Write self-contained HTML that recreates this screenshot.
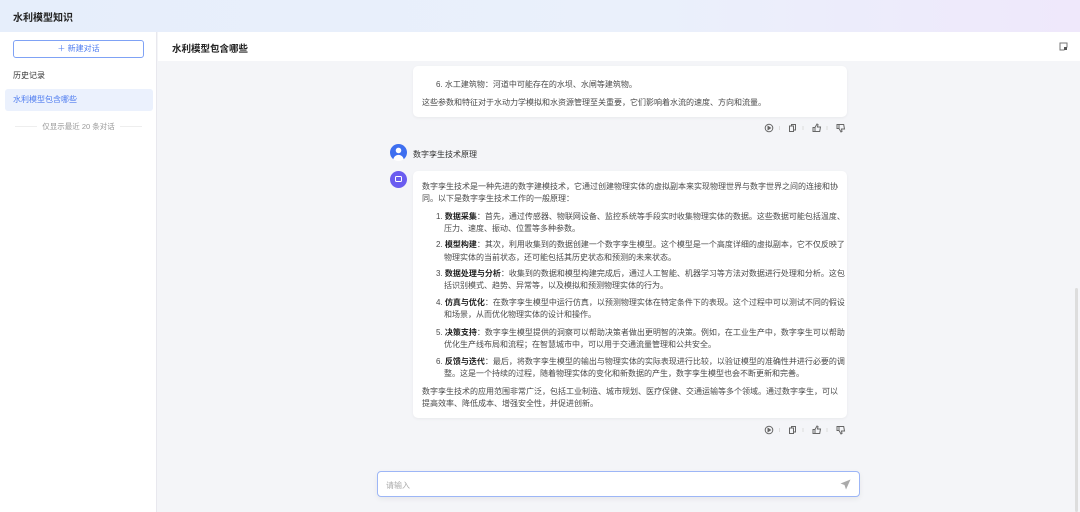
<!DOCTYPE html>
<html><head><meta charset="utf-8"><style>
*{margin:0;padding:0;box-sizing:border-box}
body{width:1080px;height:512px;overflow:hidden;font-family:"Liberation Sans","Noto Sans CJK SC",sans-serif;background:#f4f5f8;position:relative;color:#333}
.top{position:absolute;left:0;top:0;width:1080px;height:32px;background:linear-gradient(90deg,#e6eefb 0%,#eaf0fb 60%,#efe8fb 100%)}
.top span{position:absolute;left:13px;top:9px;font-size:10px;font-weight:bold;color:#222}
.side{position:absolute;left:0;top:32px;width:157px;height:480px;background:#fff;border-right:1px solid #e8e8ee}
.nb{position:absolute;left:13px;top:8px;width:131px;height:18px;border:1px solid #7fa2f5;border-radius:3px;color:#4e7cf0;font-size:8px;text-align:center;line-height:16px}
.hist{position:absolute;left:13px;top:38px;font-size:8px;color:#333}
.act{position:absolute;left:5px;top:57px;width:148px;height:22px;background:#ebf1fd;border-radius:3px;color:#4e7cf0;font-size:8px;line-height:22px;padding-left:8px}
.lim{position:absolute;left:13px;top:89px;width:131px;font-size:7.5px;color:#999;text-align:center}
.lim:before,.lim:after{content:"";position:absolute;top:5px;width:22px;border-top:1px solid #eee}
.lim:before{left:2px}.lim:after{right:2px}
.mh{position:absolute;left:158px;top:32px;width:922px;height:29px;background:#fff}
.mh span{position:absolute;left:14px;top:9px;font-size:9.5px;font-weight:bold;color:#222}
.card{position:absolute;left:413px;width:434px;background:#fff;border-radius:5px;box-shadow:0 1px 3px rgba(0,0,0,.05);font-size:8px;color:#444;padding:0 9px}
.ln{position:absolute;white-space:nowrap;font-size:8px;color:#4a4a4a}
.av{position:absolute;left:390px;width:17px;height:17px;border-radius:50%}
.inp{position:absolute;left:377px;top:471px;width:483px;height:26px;background:#fff;border:1px solid #9db6f6;border-radius:4px;box-shadow:0 2px 6px rgba(0,0,0,.06)}
.inp span{position:absolute;left:8px;top:8px;font-size:8px;color:#aaa}
b{color:#222}
</style></head><body>
<div class="top"><span>水利模型知识</span></div>
<div class="side">
<div class="nb">＋ 新建对话</div>
<div class="hist">历史记录</div>
<div class="act">水利模型包含哪些</div>
<div class="lim">仅显示最近 20 条对话</div>
</div>
<div class="mh"><span>水利模型包含哪些</span>
<svg style="position:absolute;left:901px;top:10px" width="9" height="9" viewBox="0 0 9 9"><path d="M1 1h7v4L5 8H1z" fill="none" stroke="#777"/><rect x="5" y="5" width="3" height="3" fill="#555"/></svg></div>

<div class="card" style="top:66px;height:51px"></div>
<div class="ln" style="left:436px;top:79px">6. 水工建筑物：河道中可能存在的水坝、水闸等建筑物。</div>
<div class="ln" style="left:422px;top:97px">这些参数和特征对于水动力学模拟和水资源管理至关重要，它们影响着水流的速度、方向和流量。</div>

<div class="av" style="top:144px;background:radial-gradient(circle at 50% 38%,#fff 0 2.5px,transparent 3px),radial-gradient(circle at 50% 95%,#fff 0 5px,transparent 5.5px),#3e6ff0"></div>
<div class="ln" style="left:413px;top:149px;color:#333">数字孪生技术原理</div>
<div class="av" style="top:171px;background:#6a5cf0"><div style="position:absolute;left:5px;top:5px;width:7px;height:6px;border:1.3px solid #fff;border-radius:1.5px"></div></div>

<div class="card" style="top:171px;height:247px"></div>
<div class="ln" style="left:422px;top:181px">数字孪生技术是一种先进的数字建模技术，它通过创建物理实体的虚拟副本来实现物理世界与数字世界之间的连接和协</div>
<div class="ln" style="left:422px;top:193px">同。以下是数字孪生技术工作的一般原理：</div>
<div class="ln" style="left:436px;top:211px">1. <b>数据采集</b>：首先，通过传感器、物联网设备、监控系统等手段实时收集物理实体的数据。这些数据可能包括温度、</div>
<div class="ln" style="left:444px;top:223px">压力、速度、振动、位置等多种参数。</div>
<div class="ln" style="left:436px;top:239px">2. <b>模型构建</b>：其次，利用收集到的数据创建一个数字孪生模型。这个模型是一个高度详细的虚拟副本，它不仅反映了</div>
<div class="ln" style="left:444px;top:252px">物理实体的当前状态，还可能包括其历史状态和预测的未来状态。</div>
<div class="ln" style="left:436px;top:268px">3. <b>数据处理与分析</b>：收集到的数据和模型构建完成后，通过人工智能、机器学习等方法对数据进行处理和分析。这包</div>
<div class="ln" style="left:444px;top:280px">括识别模式、趋势、异常等，以及模拟和预测物理实体的行为。</div>
<div class="ln" style="left:436px;top:297px">4. <b>仿真与优化</b>：在数字孪生模型中运行仿真，以预测物理实体在特定条件下的表现。这个过程中可以测试不同的假设</div>
<div class="ln" style="left:444px;top:309px">和场景，从而优化物理实体的设计和操作。</div>
<div class="ln" style="left:436px;top:327px">5. <b>决策支持</b>：数字孪生模型提供的洞察可以帮助决策者做出更明智的决策。例如，在工业生产中，数字孪生可以帮助</div>
<div class="ln" style="left:444px;top:339px">优化生产线布局和流程；在智慧城市中，可以用于交通流量管理和公共安全。</div>
<div class="ln" style="left:436px;top:356px">6. <b>反馈与迭代</b>：最后，将数字孪生模型的输出与物理实体的实际表现进行比较，以验证模型的准确性并进行必要的调</div>
<div class="ln" style="left:444px;top:368px">整。这是一个持续的过程，随着物理实体的变化和新数据的产生，数字孪生模型也会不断更新和完善。</div>
<div class="ln" style="left:422px;top:386px">数字孪生技术的应用范围非常广泛，包括工业制造、城市规划、医疗保健、交通运输等多个领域。通过数字孪生，可以</div>
<div class="ln" style="left:422px;top:398px">提高效率、降低成本、增强安全性，并促进创新。</div>

<svg style="position:absolute;left:764px;top:123px" width="84" height="10" viewBox="0 0 84 10" fill="none" stroke="#666" stroke-width="1">
<circle cx="5" cy="5" r="3.8"/><path d="M4 3.3v3.4L6.5 5z" fill="#666"/>
<path d="M15.5 3v4M39 3v4M63 3v4" stroke="#ddd"/>
<rect x="25.5" y="3" width="4" height="5.5"/><path d="M27.5 3V1.5h4v5.5h-2"/>
<path d="M49 4.5h2v4h-2zM51 4.5l2-3.5 1 .5-.5 2.5h3l-.8 4.5H51" />
<path d="M73 5.5h2v-4h-2zM75 5.5l2 3.5 1-.5-.5-2.5h3l-.8-4.5H75"/>
</svg>
<svg style="position:absolute;left:764px;top:425px" width="84" height="10" viewBox="0 0 84 10" fill="none" stroke="#666" stroke-width="1">
<circle cx="5" cy="5" r="3.8"/><path d="M4 3.3v3.4L6.5 5z" fill="#666"/>
<path d="M15.5 3v4M39 3v4M63 3v4" stroke="#ddd"/>
<rect x="25.5" y="3" width="4" height="5.5"/><path d="M27.5 3V1.5h4v5.5h-2"/>
<path d="M49 4.5h2v4h-2zM51 4.5l2-3.5 1 .5-.5 2.5h3l-.8 4.5H51" />
<path d="M73 5.5h2v-4h-2zM75 5.5l2 3.5 1-.5-.5-2.5h3l-.8-4.5H75"/>
</svg>

<div class="inp"><span>请输入</span>
<svg style="position:absolute;left:462px;top:7px" width="11" height="11" viewBox="0 0 11 11"><path d="M10.5 0.5L0.5 4.5l4 1.5 1.5 4.5z" fill="#aaa"/></svg></div>
<div style="position:absolute;left:1075px;top:288px;width:3px;height:224px;background:#ddd;border-radius:2px"></div>
</body></html>
